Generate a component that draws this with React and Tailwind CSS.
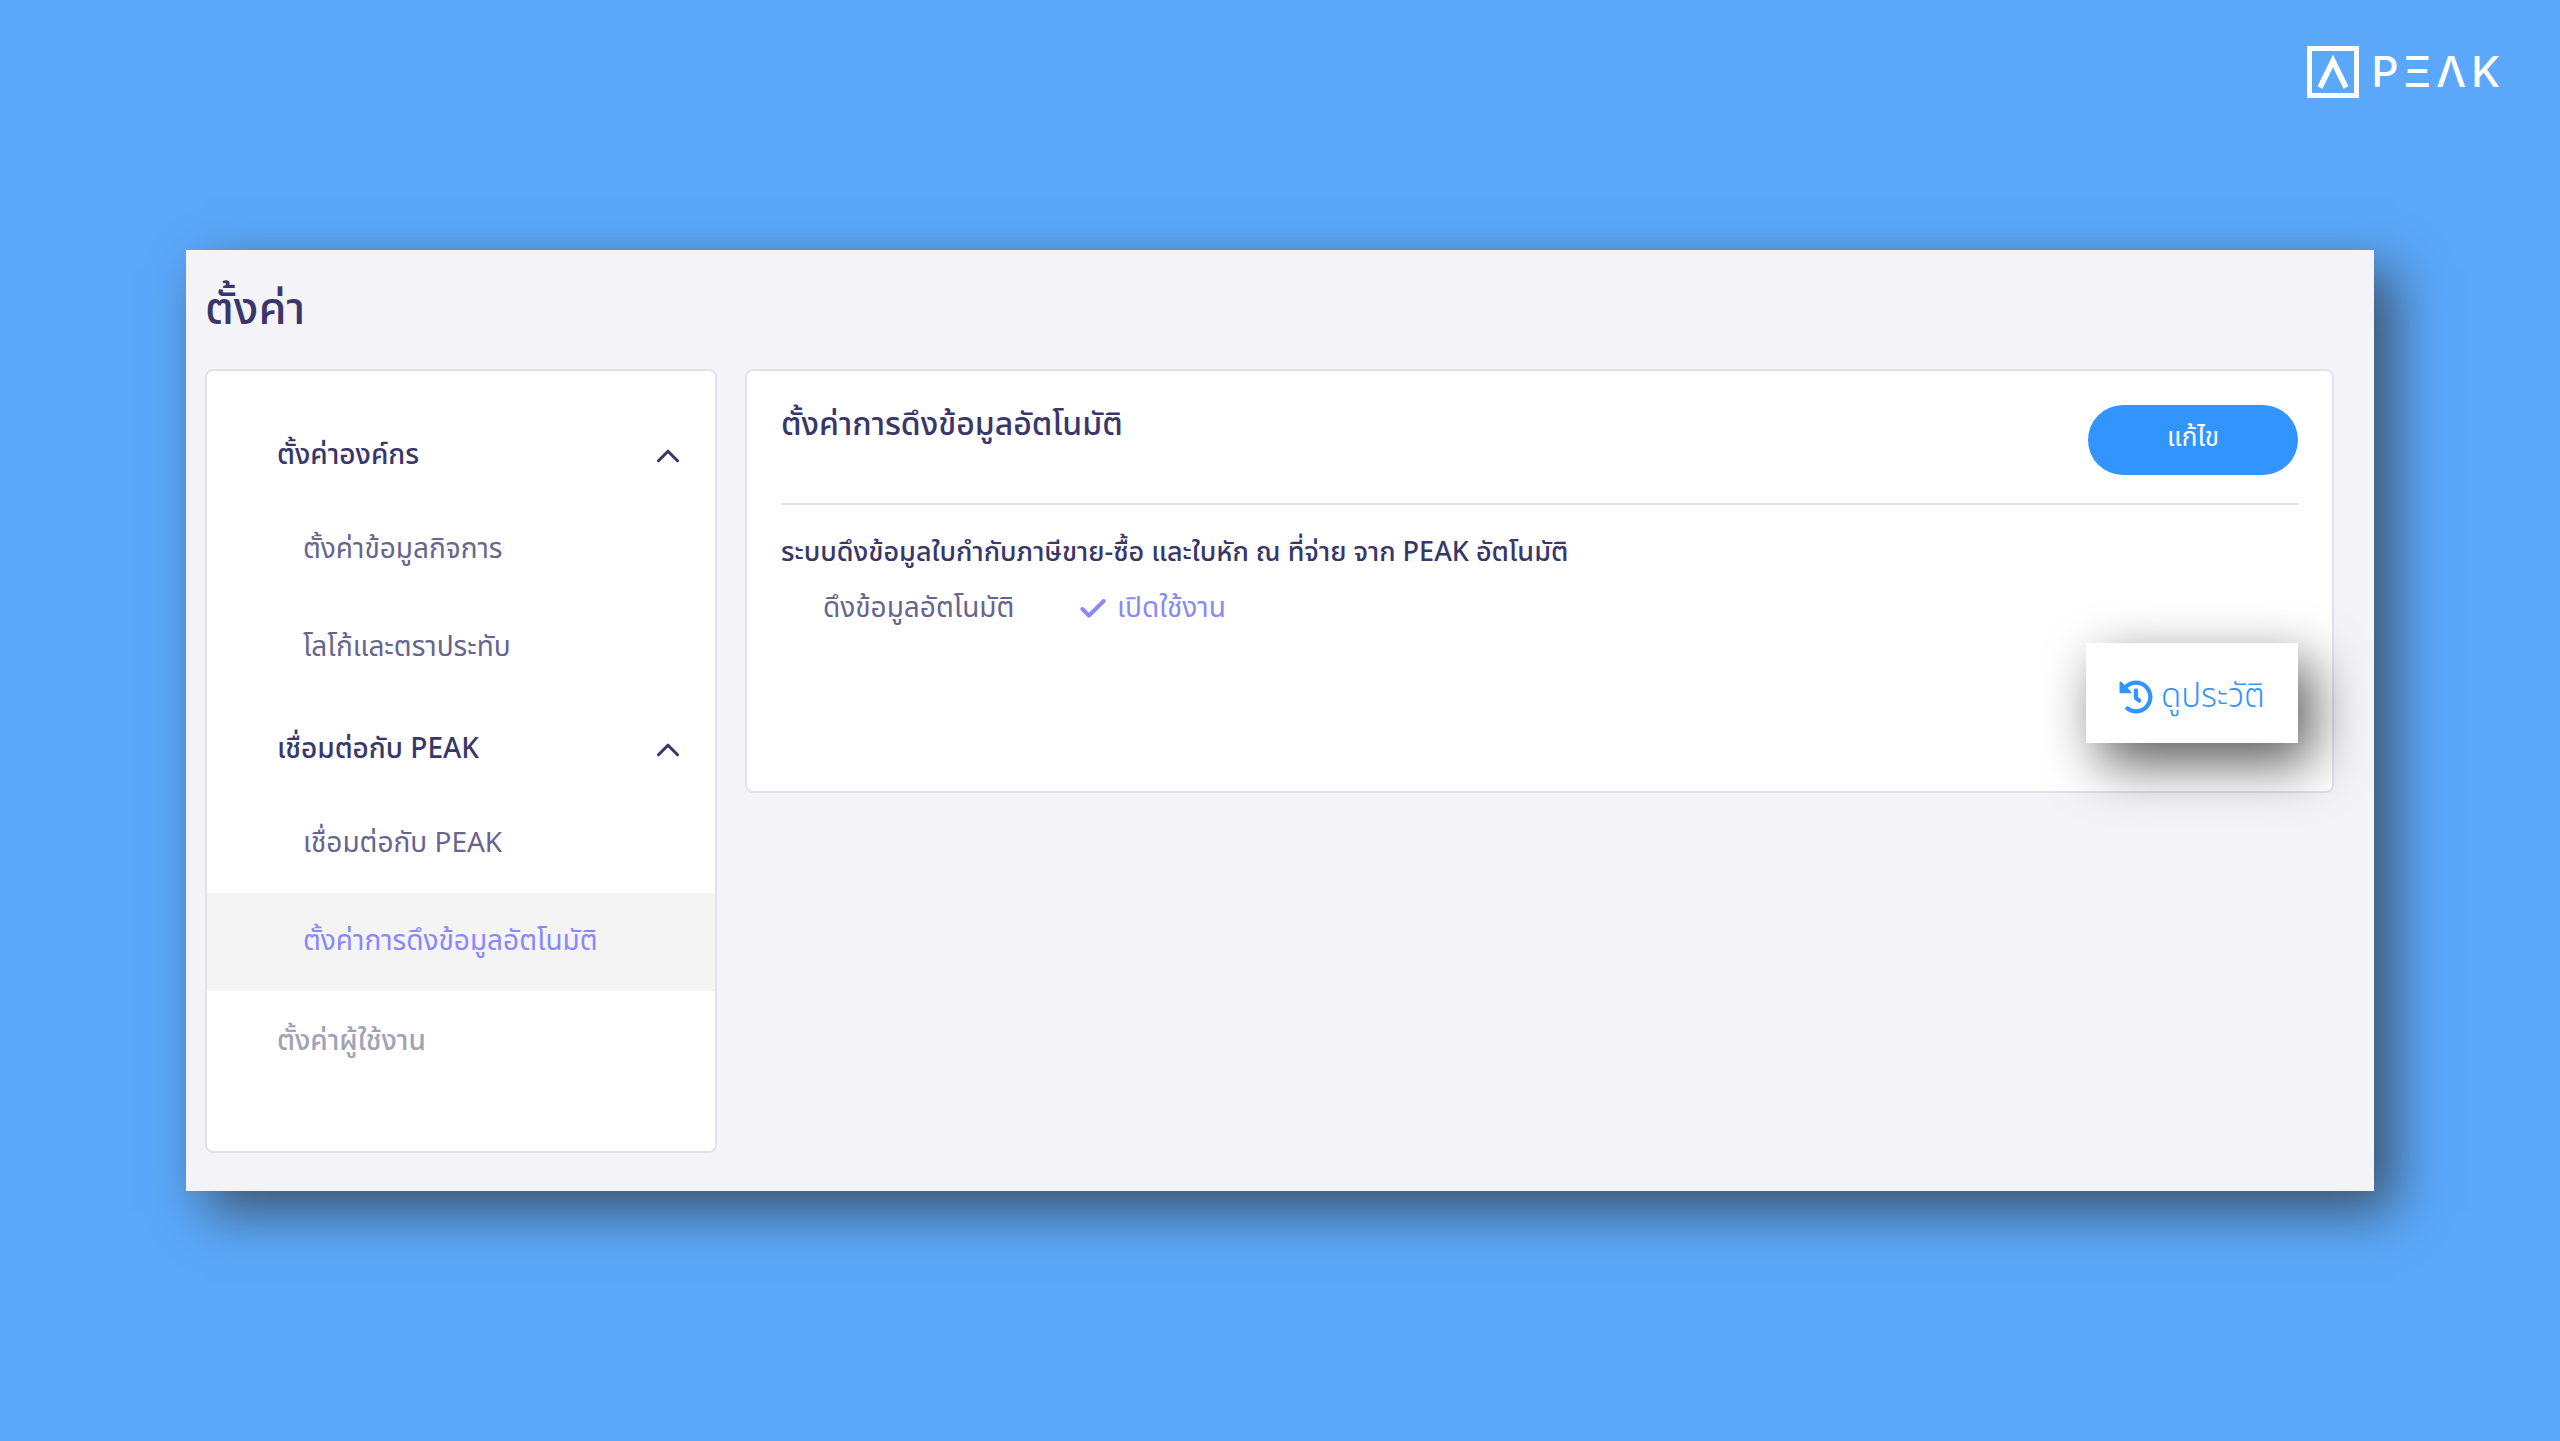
import React, { useState } from 'react';
import { FaHistory } from 'react-icons/fa';
import { Check, ChevronUp } from 'lucide-react';

const menu = [
  {
    title: 'ตั้งค่าองค์กร',
    items: ['ตั้งค่าข้อมูลกิจการ', 'โลโก้และตราประทับ'],
  },
  {
    title: 'เชื่อมต่อกับ PEAK',
    items: ['เชื่อมต่อกับ PEAK', 'ตั้งค่าการดึงข้อมูลอัตโนมัติ'],
  },
];

const Logo = () => (
  <div className="flex items-center text-white" aria-label="PEAK">
    <svg className="w-[52px] h-[52px] mr-3" viewBox="0 0 52 52" fill="none" stroke="currentColor">
      <rect x="2.5" y="2.5" width="47" height="47" strokeWidth="5" />
      <path d="M13 41.5 L26 15 L39 41.5" strokeWidth="5.5" />
    </svg>
    <div className="flex gap-[5px] font-['Inter',sans-serif] text-[42px] leading-[52px] font-medium">
      <span>P</span>
      <span>Ξ</span>
      <span>Λ</span>
      <span>K</span>
    </div>
  </div>
);

const Sidebar = () => {
  const [active, setActive] = useState('ตั้งค่าการดึงข้อมูลอัตโนมัติ');
  const [closed, setClosed] = useState([]);

  const toggle = (title) => {
    setClosed((prev) =>
      prev.includes(title) ? prev.filter((t) => t !== title) : [...prev, title]
    );
  };

  return (
    <nav className="w-[512px] shrink-0 bg-white border-2 border-[#e2e2ec] rounded-lg pt-8 pb-[62px]">
      {menu.map((group) => (
        <div key={group.title}>
          <button
            className="w-full h-[98px] pl-[70px] pr-7 pt-2 flex items-center justify-between text-[28px] leading-10 font-medium text-[#39376a]"
            onClick={() => toggle(group.title)}
          >
            {group.title}
            <ChevronUp size={38} strokeWidth={2} />
          </button>
          {!closed.includes(group.title) &&
            group.items.map((item) => (
              <a
                key={item}
                href="#"
                onClick={() => setActive(item)}
                className={`flex items-center h-[98px] pl-24 text-[28px] leading-10 ${
                  active === item ? 'bg-[#f4f4f5] text-[#8a88f8]' : 'text-[#67658c]'
                }`}
              >
                {item}
              </a>
            ))}
        </div>
      ))}
      <a href="#" className="flex items-center h-[98px] pl-[70px] pt-1 text-[28px] leading-10 font-medium text-[#a3a2b5]">
        ตั้งค่าผู้ใช้งาน
      </a>
    </nav>
  );
};

const AutoImportCard = () => (
  <section className="flex-1 bg-white border-2 border-[#e2e2ec] rounded-lg px-[34px] pt-[34px] pb-12 flex flex-col">
    <div className="flex justify-between items-start pb-7 border-b-2 border-[#e2e2ec]">
      <h2 className="text-[32px] leading-10 font-medium text-[#39376a]">ตั้งค่าการดึงข้อมูลอัตโนมัติ</h2>
      <button className="w-[210px] h-[70px] pb-1 rounded-full bg-[#3295ff] text-white text-[26px] leading-10">
        แก้ไข
      </button>
    </div>
    <h3 className="mt-7 text-[27px] leading-10 font-medium text-[#39376a]">
      ระบบดึงข้อมูลใบกำกับภาษีขาย-ซื้อ และใบหัก ณ ที่จ่าย จาก PEAK อัตโนมัติ
    </h3>
    <dl className="mt-4 pl-[42px] flex text-[28px] leading-10">
      <dt className="w-[254px] text-[#67658c]">ดึงข้อมูลอัตโนมัติ</dt>
      <dd className="flex items-center gap-2 text-[#8a88f8]">
        <Check size={32} strokeWidth={3} />
        เปิดใช้งาน
      </dd>
    </dl>
    <button className="self-end mt-3.5 w-[212px] h-[100px] pt-2 flex items-center justify-center gap-2 bg-white text-[#3295ff] text-[33px] leading-10 font-light shadow-[14px_20px_54px_rgba(0,0,0,0.65)]">
      <FaHistory size={34} />
      ดูประวัติ
    </button>
  </section>
);

const App = () => {
  return (
    <div className="min-h-screen bg-[#5ba8fa] font-['Noto_Sans_Thai','Noto_Sans',sans-serif]">
      <header className="flex justify-end px-[60px] pt-[46px]">
        <Logo />
      </header>

      <main className="mx-[186px] mt-[152px] bg-[#f3f3f8] pl-[19px] pr-10 pt-8 pb-[38px] shadow-[20px_20px_50px_rgba(48,48,48,0.7)]">
        <h1 className="text-[45px] leading-[56px] font-medium text-[#39376a]">ตั้งค่า</h1>
        <div className="mt-[31px] flex items-start gap-7">
          <Sidebar />
          <AutoImportCard />
        </div>
      </main>
    </div>
  );
};

export default App;
